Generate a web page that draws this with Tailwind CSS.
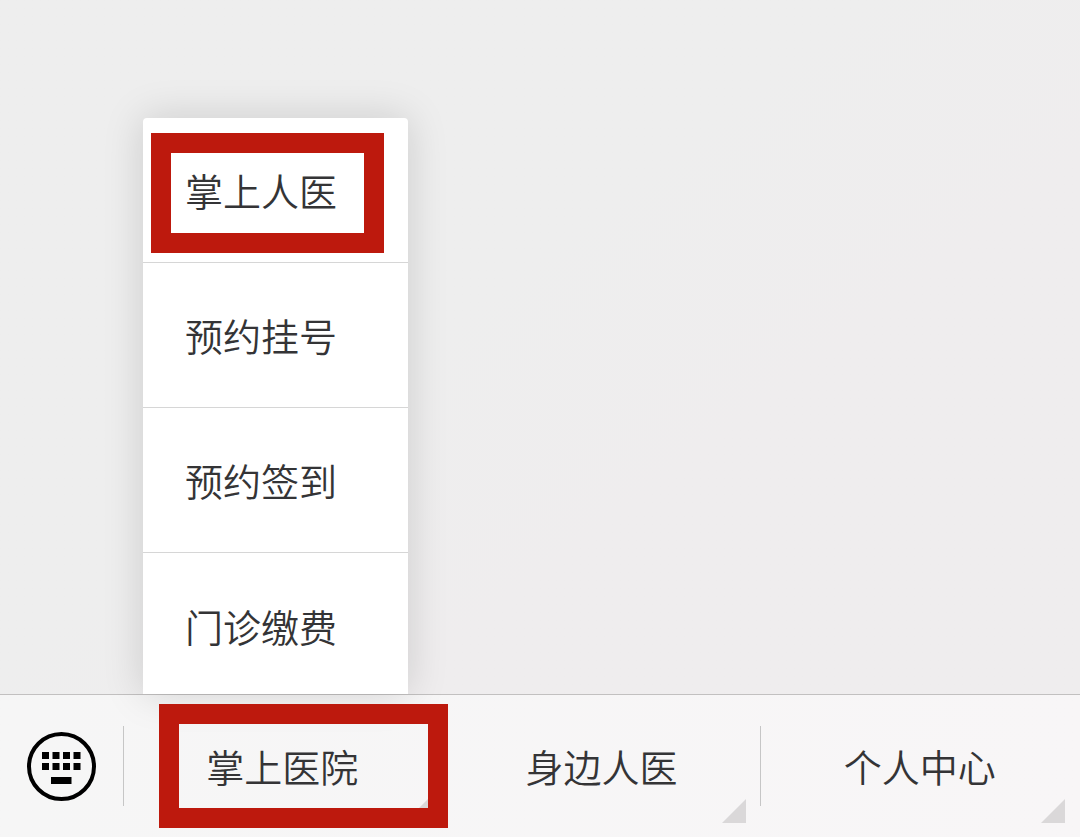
<!DOCTYPE html>
<html lang="zh-CN">
<head>
<meta charset="utf-8">
<meta name="viewport" content="width=device-width, initial-scale=1">
<title>掌上人医</title>
<script src="https://cdn.jsdelivr.net/npm/@tailwindcss/browser@4"></script>
</head>
<body class="flex min-h-screen flex-col overflow-hidden bg-linear-to-br from-[#eeeeee] from-40% to-[#efedee] to-60% font-['Noto_Sans_CJK_SC',sans-serif] text-[38px] leading-[56px] font-[350] text-[#343436]">
  <main class="flex-1"></main>
  <footer class="flex h-[143px] border-t border-[#c2c0c0] bg-linear-to-r from-[#f6f6f6] to-[#f8f6f7]">
    <div class="flex w-[124px] shrink-0 items-center">
      <button type="button" aria-label="键盘" class="flex h-20 w-full items-center border-r border-[#c6c6c6] pl-[26px]">
        <svg class="size-[70px]" viewBox="0 0 70 70" fill="#000">
          <circle cx="35.500" cy="35.500" r="32.500" fill="none" stroke="#000" stroke-width="4"/>
          <path d="M16 21h7v7h-7zM26.500 21h7v7h-7zM37 21h7v7h-7zM47.500 21h7v7h-7zM16 32h7v7h-7zM26.500 32h7v7h-7zM37 32h7v7h-7zM47.500 32h7v7h-7zM25 46h20.500v7h-20.500z"/>
        </svg>
      </button>
    </div>
    <nav class="grid flex-1 grid-cols-3">
      <div class="relative">
        <div class="absolute bottom-full left-[19px] mb-px w-[265px] divide-y divide-[#d6d6d6] rounded-t-sm bg-white shadow-[0_0_40px_rgba(0,0,0,0.15)]">
          <div class="relative flex">
            <button type="button" class="h-[144px] w-full px-[42px] text-left">掌上人医</button>
            <span class="pointer-events-none absolute top-[15px] left-2 h-[120px] w-[233px] border-20 border-[#bd190d]"></span>
          </div>
          <button type="button" class="block h-[145px] w-full px-[42px] text-left">预约挂号</button>
          <button type="button" class="block h-[145px] w-full px-[42px] text-left">预约签到</button>
          <button type="button" class="block h-[141px] w-full px-[42px] pt-1 text-left">门诊缴费</button>
        </div>
        <button type="button" class="h-full w-full pr-0.5">掌上医院</button>
        <svg class="absolute right-[15px] bottom-[14px] size-6" viewBox="0 0 24 24" fill="#dad8d9"><path d="M24 0V24H0z"/></svg>
        <span class="pointer-events-none absolute top-[9px] left-[35px] h-[124px] w-[289px] border-20 border-[#bd190d]"></span>
      </div>
      <div class="relative flex items-center">
        <button type="button" class="h-20 w-full border-r border-[#c6c6c6]">身边人医</button>
        <svg class="absolute right-[15px] bottom-[14px] size-6" viewBox="0 0 24 24" fill="#dad8d9"><path d="M24 0V24H0z"/></svg>
      </div>
      <div class="relative">
        <button type="button" class="h-full w-full pr-0.5">个人中心</button>
        <svg class="absolute right-[15px] bottom-[14px] size-6" viewBox="0 0 24 24" fill="#dad8d9"><path d="M24 0V24H0z"/></svg>
      </div>
    </nav>
  </footer>
</body>
</html>
